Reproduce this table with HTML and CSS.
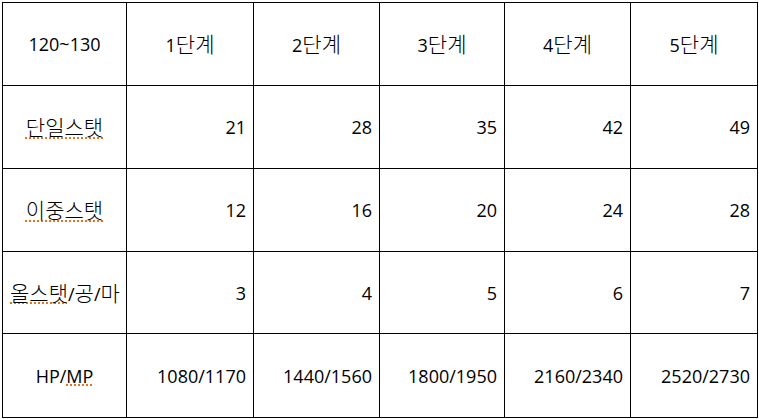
FILE: index.html
```html
<!DOCTYPE html>
<html lang="ko">
<head>
<meta charset="utf-8">
<link rel="stylesheet" href="styles.css">
</head>
<body>
<table class="grid">
  <colgroup>
    <col class="c1"><col class="c2"><col class="c3"><col class="c4"><col class="c5"><col class="c6">
  </colgroup>
  <tr class="r1">
    <td class="head">120~130</td>
    <td class="head">1<span class="ko">단계</span></td>
    <td class="head">2<span class="ko">단계</span></td>
    <td class="head">3<span class="ko">단계</span></td>
    <td class="head">4<span class="ko">단계</span></td>
    <td class="head">5<span class="ko">단계</span></td>
  </tr>
  <tr class="r2">
    <td class="head"><span class="ko spell">단일스탯</span></td>
    <td class="num">21</td>
    <td class="num">28</td>
    <td class="num">35</td>
    <td class="num">42</td>
    <td class="num">49</td>
  </tr>
  <tr class="r3">
    <td class="head"><span class="ko spell">이중스탯</span></td>
    <td class="num">12</td>
    <td class="num">16</td>
    <td class="num">20</td>
    <td class="num">24</td>
    <td class="num">28</td>
  </tr>
  <tr class="r4">
    <td class="head"><span class="ko spell">올스탯</span>/<span class="ko">공</span>/<span class="ko">마</span></td>
    <td class="num">3</td>
    <td class="num">4</td>
    <td class="num">5</td>
    <td class="num">6</td>
    <td class="num">7</td>
  </tr>
  <tr class="r5">
    <td class="head">HP/<span class="spell">MP</span></td>
    <td class="num">1080/1170</td>
    <td class="num">1440/1560</td>
    <td class="num">1800/1950</td>
    <td class="num">2160/2340</td>
    <td class="num">2520/2730</td>
  </tr>
</table>
</body>
</html>
```

FILE: styles.css
```css
html, body {
  margin: 0;
  padding: 0;
  background: #ffffff;
}

body {
  padding: 2px 0 0 2px;
  font-family: "Open Sans", "Noto Sans CJK KR", sans-serif;
  font-size: 18px;
  color: #000000;
}

.grid {
  border-collapse: collapse;
  table-layout: fixed;
  width: 755px;
}

.c1 { width: 124px; }
.c2 { width: 127px; }
.c3 { width: 126px; }
.c4 { width: 125px; }
.c5 { width: 126px; }
.c6 { width: 127px; }

.grid td {
  border: 1px solid #000000;
  padding: 0 7px;
  vertical-align: middle;
  white-space: nowrap;
  line-height: 24px;
}

.r1 { height: 83px; }
.r2 { height: 83px; }
.r3 { height: 83px; }
.r4 { height: 82px; }
.r5 { height: 84px; }

.head { text-align: center; }
.num { text-align: right; }

.ko {
  font-family: "Noto Sans CJK KR", sans-serif;
  font-size: 21px;
  font-weight: 300;
  line-height: 24px;
}

.spell {
  text-decoration-line: underline;
  text-decoration-style: dotted;
  text-decoration-color: #e8731e;
  text-decoration-thickness: 2px;
  text-underline-offset: 2px;
}
```
